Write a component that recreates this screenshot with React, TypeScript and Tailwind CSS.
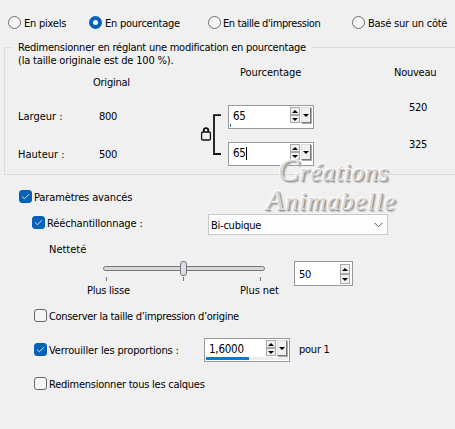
import { ReactNode, useState } from 'react';
import { clsx } from 'clsx';

const modes = [
  { label: 'En pixels', className: 'w-[81px] gap-[3px]' },
  { label: 'En pourcentage', className: 'w-[119px] gap-[3px]' },
  { label: "En taille d'impression", className: 'w-[144px] gap-[2px] tracking-[-0.4px]' },
  { label: 'Basé sur un côté', className: 'w-[100px] gap-[3px]' },
];

function Radio({ checked, onClick }: { checked: boolean; onClick: () => void }) {
  return (
    <button
      onClick={onClick}
      className={clsx(
        'size-[13px] shrink-0 rounded-full',
        checked ? 'border-4 border-[#0560b8] bg-white' : 'border border-[#707070] bg-[#f6f6f6]'
      )}
    />
  );
}

function Checkbox({ initial = false, className, children }: { initial?: boolean; className?: string; children: ReactNode }) {
  const [checked, setChecked] = useState(initial);

  return (
    <label className={clsx('flex h-[13px] items-center gap-[2px] whitespace-nowrap', className)}>
      <button
        onClick={() => setChecked(!checked)}
        className={clsx(
          'flex size-[13px] shrink-0 items-center justify-center rounded-[3px] border',
          checked ? 'border-[#0560b8] bg-[#0560b8]' : 'border-[#666] bg-[#f5f5f5]'
        )}
      >
        {checked && (
          <svg width="9" height="9" viewBox="0 0 9 9" fill="none" stroke="#d5e6f7">
            <path d="M1 4.5 3.4 6.8 8 2.2" />
          </svg>
        )}
      </button>
      <span className="pt-px">{children}</span>
    </label>
  );
}

function Spinner({ tall = false }: { tall?: boolean }) {
  const button = clsx(
    'flex w-[10px] items-center justify-center border border-[#a8a8a8] bg-[#f0f0f0]',
    tall ? 'h-[10px]' : 'h-[8px]'
  );
  return (
    <div className="flex flex-col">
      <button className={button}>
        <svg width="6" height="3" viewBox="0 0 6 3" className="shrink-0"><path d="M3 0 6 3H0z" /></svg>
      </button>
      <button className={button}>
        <svg width="6" height="3" viewBox="0 0 6 3" className="shrink-0"><path d="M0 0H6L3 3z" /></svg>
      </button>
    </div>
  );
}

function NumberBox({ value, fill, caret = false }: { value: string; fill?: string; caret?: boolean }) {
  return (
    <div className="flex h-[24px] w-[86px] flex-col border border-[#999] bg-white px-px">
      <div className="flex h-[18px] pt-px">
        <span className="flex h-[18px] w-[60px] items-center pl-[3px] text-[11.5px]">
          {value}
          {caret && <span className="h-[13px] w-px bg-black" />}
        </span>
        <Spinner />
        <button className="ml-[1px] flex h-[16px] w-[10px] items-center justify-center border border-t-[#ddd] border-r-[#777] border-b-[#777] border-l-[#ddd] bg-[#f0f0f0] shadow-[1px_1px_0_#aaa]">
          <svg width="6" height="3" viewBox="0 0 6 3" className="shrink-0"><path d="M0 0H6L3 3z" /></svg>
        </button>
      </div>
      {fill && (
        <div className={clsx('flex h-[3px]', fill === 'w-[43px]' && 'bg-[#eee]')}>
          <div className={clsx('h-full bg-[#0a78d6]', fill)} />
        </div>
      )}
    </div>
  );
}

export default function App() {
  const [mode, setMode] = useState(1);

  return (
    <main className="relative h-[429px] w-[455px] overflow-hidden bg-[#f0f0f0] font-['DejaVu_Sans_Condensed','DejaVu_Sans',sans-serif] text-[11px] leading-[13px] tracking-[-0.24px] text-black">
      <div className="flex h-[29px] pt-[16px] pl-[8px]">
        {modes.map((m, i) => (
          <label key={m.label} className={clsx('flex h-[13px] shrink-0 items-center whitespace-nowrap', m.className)}>
            <Radio checked={mode === i} onClick={() => setMode(i)} />
            <span className="pt-px">{m.label}</span>
          </label>
        ))}
      </div>

      {/* Groupe des dimensions */}
      <section className="mt-[18px] ml-[4px] h-[128px] w-[470px] border border-[#dcdcdc]">
        <div className="-mt-[7px] ml-[7px] w-[300px] bg-[#f0f0f0] pl-[6px] whitespace-nowrap">
          <p>Redimensionner en réglant une modification en pourcentage</p>
          <p className="tracking-[-0.18px]">(la taille originale est de 100 %).</p>
        </div>
        <div className="-mt-px flex">
          <div className="w-[75px] pt-[44px] pl-[13px] tracking-normal whitespace-nowrap">
            <p>Largeur :</p>
            <p className="mt-[25px]">Hauteur :</p>
          </div>
          <div className="w-[120px] pt-[10px] pl-[13px]">
            <p>Original</p>
            <p className="mt-[21px] ml-[6px]">800</p>
            <p className="mt-[25px] ml-[6px]">500</p>
          </div>
          <div className="w-[28px] pt-[48px]">
            <svg width="24" height="42" viewBox="0 0 24 42" fill="none" stroke="#111">
              <path d="M21 1.2H14V40H21" strokeWidth="1.8" />
              <rect x="1.6" y="18" width="8.8" height="8" rx="1.2" strokeWidth="1.3" />
              <path d="M3.8 18V16Q3.8 14.2 6 14.2T8.2 16V18" strokeWidth="1.8" />
            </svg>
          </div>
          <div className="w-[166px]">
            <p className="ml-[12px] tracking-[-0.05px]">Pourcentage</p>
            <div className="mt-[26px]"><NumberBox value="65" fill="w-[1px]" /></div>
            <div className="mt-[13px]"><NumberBox value="65" caret /></div>
          </div>
          <div className="shrink-0">
            <p>Nouveau</p>
            <p className="mt-[22px] ml-[15px]">520</p>
            <p className="mt-[24px] ml-[15px]">325</p>
          </div>
        </div>
      </section>

      <Checkbox initial className="mt-[15px] ml-[19px] tracking-[-0.12px]">Paramètres avancés</Checkbox>

      <div className="mt-[11px] ml-[32px] flex">
        <Checkbox initial className="mt-[2px] w-[176px] tracking-[-0.14px]">Rééchantillonnage :</Checkbox>
        <div className="flex h-[21px] w-[180px] items-center justify-between border border-[#c9c9c9] bg-[#fdfdfd] pr-[4px] pl-[2px]">
          <span className="pt-px">Bi-cubique</span>
          <svg width="9" height="6" viewBox="0 0 9 6" fill="none" stroke="#555"><path d="M.5 .8 4.5 4.8 8.5 .8" /></svg>
        </div>
      </div>

      <div className="flex">
        <div className="w-[294px] pt-[8px]">
          <p className="ml-[49px] tracking-normal">Netteté</p>
          <svg width="164" height="22" viewBox="0 0 164 22" className="mt-[4px] ml-[102px]">
            <rect x="1.5" y="6.5" width="161" height="4" rx="2" fill="#d8d8d4" stroke="#777" />
            <rect x="78.5" y="1.5" width="6" height="14" rx="2.5" fill="#dcdcec" stroke="#777" />
            <path d="M4.5 17v4M81.5 17v4M158.5 17v4" stroke="#777" />
          </svg>
          <div className="mt-[2px] ml-[87px] flex">
            <span className="w-[153px]">Plus lisse</span>
            <span className="tracking-[-0.1px] whitespace-nowrap">Plus net</span>
          </div>
        </div>
        <div className="mt-[26px] flex h-[25px] w-[59px] justify-between border border-[#999] bg-white pt-[2px] pr-[2px] pl-[4px]">
          <span className="leading-[21px]">50</span>
          <Spinner tall />
        </div>
      </div>

      <Checkbox className="mt-[12px] ml-[34px] tracking-[-0.32px]">Conserver la taille d’impression d’origine</Checkbox>

      <div className="mt-[16px] ml-[34px] flex">
        <Checkbox initial className="mt-[5px] w-[170px] tracking-[-0.14px]">Verrouiller les proportions :</Checkbox>
        <NumberBox value="1,6000" fill="w-[43px]" />
        <span className="mt-[5px] ml-[9px]">pour 1</span>
      </div>

      <Checkbox className="mt-[15px] ml-[34px]">Redimensionner tous les calques</Checkbox>

      {/* Signature en relief par-dessus le formulaire */}
      <div className="pointer-events-none absolute top-[157px] left-[266px] font-['Liberation_Serif',serif] text-[26px] leading-[27px] tracking-[0.5px] text-[#d6d6d6] italic [text-shadow:-1px_-1px_0_#fff,1px_1px_1px_#8c8c8c,2px_2px_1px_#c4c4c4]">
        <p className="ml-[12px] first-letter:text-[32px]">Créations</p>
        <p className="tracking-[1px] first-letter:text-[30px]">Animabelle</p>
      </div>
    </main>
  );
}
